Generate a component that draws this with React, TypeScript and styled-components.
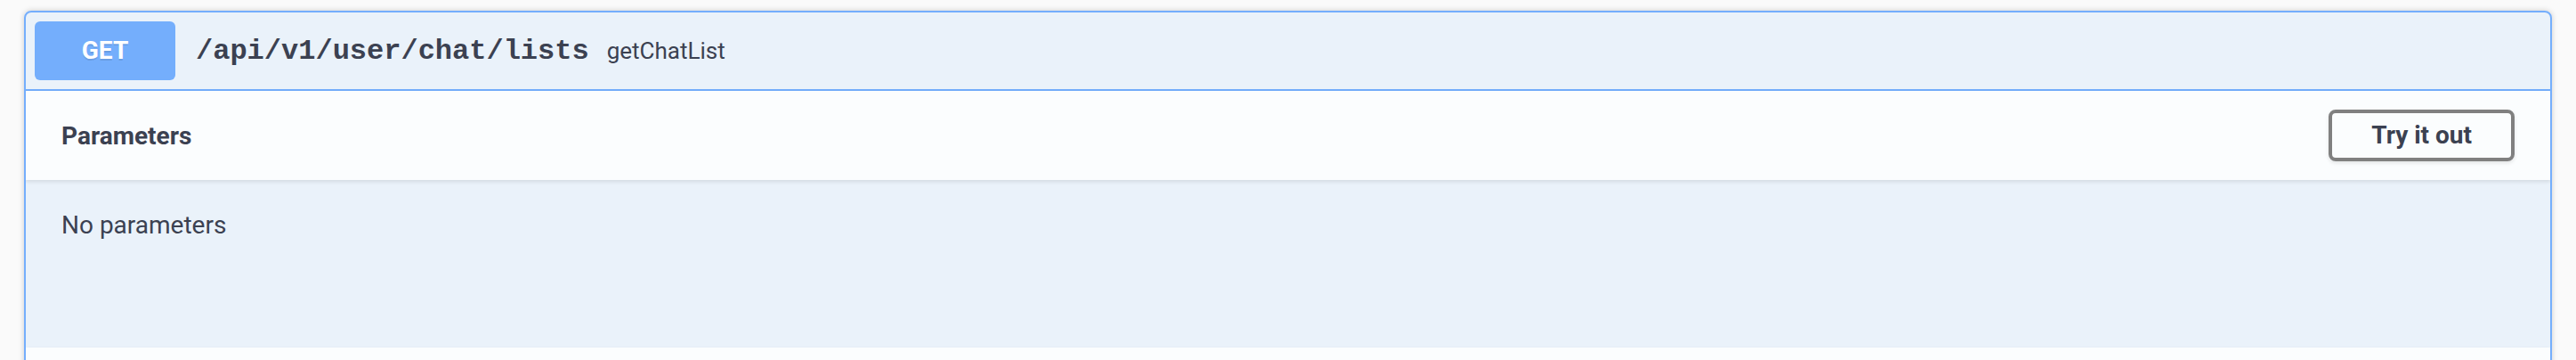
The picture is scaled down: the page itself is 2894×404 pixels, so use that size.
import React from 'react';
import styled, { createGlobalStyle } from 'styled-components';

const textColor = '#3b4151';
const getBlue = '#74aefc';

const GlobalStyle = createGlobalStyle`
  html, body {
    margin: 0;
    padding: 0;
    background: #fafafa;
  }

  body {
    font-family: Roboto, 'Liberation Sans', sans-serif;
    color: ${textColor};
  }
`;

const Page = styled.div`
  padding: 12px 27px;
`;

const OpBlock = styled.div<{ $color: string }>`
  border: 2px solid ${({ $color }) => $color};
  border-radius: 8px;
  background: rgba(97, 175, 254, 0.1);
  box-shadow: 0 0 6px rgba(0, 0, 0, 0.19);
  overflow: hidden;
`;

const Summary = styled.div<{ $color: string }>`
  display: flex;
  align-items: center;
  padding: 10px;
  border-bottom: 2px solid ${({ $color }) => $color};
`;

const MethodBadge = styled.span<{ $color: string }>`
  display: inline-block;
  min-width: 158px;
  padding: 12px 0;
  border-radius: 6px;
  background: ${({ $color }) => $color};
  color: #fff;
  font-family: Roboto, 'Liberation Sans', sans-serif;
  font-size: 28px;
  font-weight: 700;
  line-height: 42px;
  text-align: center;
  text-shadow: 0 2px 0 rgba(0, 0, 0, 0.1);
`;

const Path = styled.span`
  padding: 0 20px 0 23px;
  font-family: 'Liberation Mono', 'DejaVu Sans Mono', monospace;
  font-size: 32px;
  font-weight: 700;
  color: ${textColor};
`;

const Description = styled.span`
  font-family: Roboto, 'Liberation Sans', sans-serif;
  font-size: 26px;
  color: ${textColor};
`;

const SectionHeader = styled.div`
  display: flex;
  align-items: center;
  justify-content: space-between;
  min-height: 100px;
  box-sizing: border-box;
  padding: 16px 40px;
  background: rgba(255, 255, 255, 0.8);
  box-shadow: 0 2px 4px rgba(0, 0, 0, 0.1);
  position: relative;
`;

const SectionTitle = styled.h4`
  margin: 0;
  font-size: 28px;
  font-weight: 700;
  color: ${textColor};
`;

const TryOutButton = styled.button`
  padding: 8px 44px;
  border: 4px solid #808080;
  border-radius: 8px;
  background: transparent;
  box-shadow: 0 2px 4px rgba(0, 0, 0, 0.1);
  font-family: Roboto, 'Liberation Sans', sans-serif;
  font-size: 28px;
  font-weight: 700;
  line-height: 34px;
  color: ${textColor};
  cursor: pointer;
`;

const DescriptionWrapper = styled.div`
  min-height: 188px;
  box-sizing: border-box;
  padding: 30px 40px;

  p {
    margin: 0;
    font-size: 28px;
    line-height: 42px;
    color: ${textColor};
  }
`;

export default function App() {
  return (
    <>
      <GlobalStyle />
      <Page>
        <OpBlock $color={getBlue}>
          <Summary $color={getBlue}>
            <MethodBadge $color={getBlue}>GET</MethodBadge>
            <Path>/api/v1/user/chat/lists</Path>
            <Description>getChatList</Description>
          </Summary>
          <SectionHeader>
            <SectionTitle>Parameters</SectionTitle>
            <TryOutButton>Try it out</TryOutButton>
          </SectionHeader>
          <DescriptionWrapper>
            <p>No parameters</p>
          </DescriptionWrapper>
          <SectionHeader />
        </OpBlock>
      </Page>
    </>
  );
}
